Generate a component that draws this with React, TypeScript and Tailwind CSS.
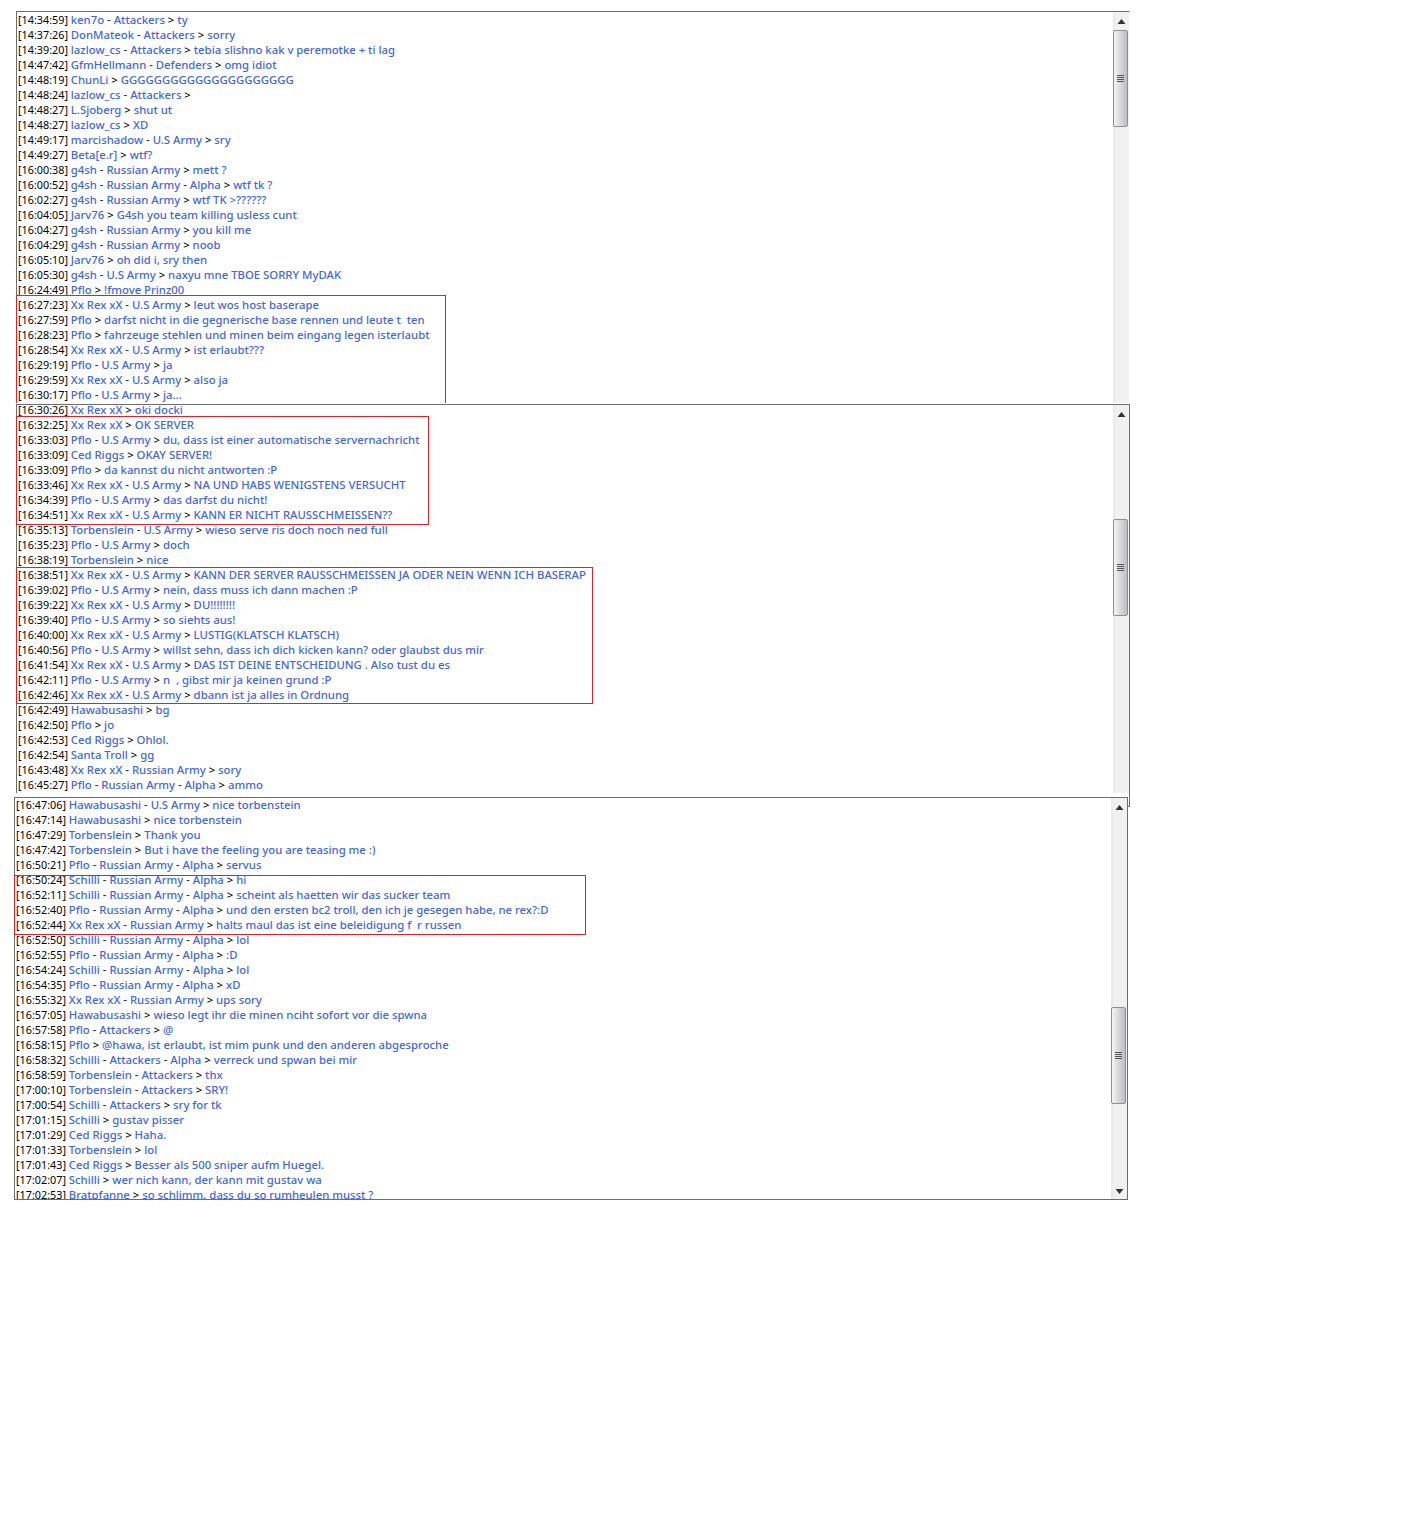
/**
 * Three stacked chat log screenshots with red highlight boxes.
 */

import React from 'react';

const panelOneRows = [
  '[14:34:59]|ken7o - Attackers > ty',
  '[14:37:26]|DonMateok - Attackers > sorry',
  '[14:39:20]|lazlow_cs - Attackers > tebia slishno kak v peremotke + ti lag',
  '[14:47:42]|GfmHellmann - Defenders > omg idiot',
  '[14:48:19]|ChunLi > GGGGGGGGGGGGGGGGGGGGG',
  '[14:48:24]|lazlow_cs - Attackers >',
  '[14:48:27]|L.Sjoberg > shut ut',
  '[14:48:27]|lazlow_cs > XD',
  '[14:49:17]|marcishadow - U.S Army > sry',
  '[14:49:27]|Beta[e.r] > wtf?',
  '[16:00:38]|g4sh - Russian Army > mett ?',
  '[16:00:52]|g4sh - Russian Army - Alpha > wtf tk ?',
  '[16:02:27]|g4sh - Russian Army > wtf TK >??????',
  '[16:04:05]|Jarv76 > G4sh you team killing usless cunt',
  '[16:04:27]|g4sh - Russian Army > you kill me',
  '[16:04:29]|g4sh - Russian Army > noob',
  '[16:05:10]|Jarv76 > oh did i, sry then',
  '[16:05:30]|g4sh - U.S Army > naxyu mne TBOE SORRY MyDAK',
  '[16:24:49]|Pflo > !fmove Prinz00',
  '[16:27:23]|Xx Rex xX - U.S Army > leut wos host baserape',
  '[16:27:59]|Pflo > darfst nicht in die gegnerische base rennen und leute t  ten',
  '[16:28:23]|Pflo > fahrzeuge stehlen und minen beim eingang legen isterlaubt',
  '[16:28:54]|Xx Rex xX - U.S Army > ist erlaubt???',
  '[16:29:19]|Pflo - U.S Army > ja',
  '[16:29:59]|Xx Rex xX - U.S Army > also ja',
  '[16:30:17]|Pflo - U.S Army > ja...',
];

const panelTwoRows = [
  '[16:30:26]|Xx Rex xX > oki docki',
  '[16:32:25]|Xx Rex xX > OK SERVER',
  '[16:33:03]|Pflo - U.S Army > du, dass ist einer automatische servernachricht',
  '[16:33:09]|Ced Riggs > OKAY SERVER!',
  '[16:33:09]|Pflo > da kannst du nicht antworten :P',
  '[16:33:46]|Xx Rex xX - U.S Army > NA UND HABS WENIGSTENS VERSUCHT',
  '[16:34:39]|Pflo - U.S Army > das darfst du nicht!',
  '[16:34:51]|Xx Rex xX - U.S Army > KANN ER NICHT RAUSSCHMEISSEN??',
  '[16:35:13]|Torbenslein - U.S Army > wieso serve ris doch noch ned full',
  '[16:35:23]|Pflo - U.S Army > doch',
  '[16:38:19]|Torbenslein > nice',
  '[16:38:51]|Xx Rex xX - U.S Army > KANN DER SERVER RAUSSCHMEISSEN JA ODER NEIN WENN ICH BASERAP',
  '[16:39:02]|Pflo - U.S Army > nein, dass muss ich dann machen :P',
  '[16:39:22]|Xx Rex xX - U.S Army > DU!!!!!!!!',
  '[16:39:40]|Pflo - U.S Army > so siehts aus!',
  '[16:40:00]|Xx Rex xX - U.S Army > LUSTIG(KLATSCH KLATSCH)',
  '[16:40:56]|Pflo - U.S Army > willst sehn, dass ich dich kicken kann? oder glaubst dus mir',
  '[16:41:54]|Xx Rex xX - U.S Army > DAS IST DEINE ENTSCHEIDUNG . Also tust du es',
  '[16:42:11]|Pflo - U.S Army > n  , gibst mir ja keinen grund :P',
  '[16:42:46]|Xx Rex xX - U.S Army > dbann ist ja alles in Ordnung',
  '[16:42:49]|Hawabusashi > bg',
  '[16:42:50]|Pflo > jo',
  '[16:42:53]|Ced Riggs > Ohlol.',
  '[16:42:54]|Santa Troll > gg',
  '[16:43:48]|Xx Rex xX - Russian Army > sory',
  '[16:45:27]|Pflo - Russian Army - Alpha > ammo',
];

const panelThreeRows = [
  '[16:47:06]|Hawabusashi - U.S Army > nice torbenstein',
  '[16:47:14]|Hawabusashi > nice torbenstein',
  '[16:47:29]|Torbenslein > Thank you',
  '[16:47:42]|Torbenslein > But i have the feeling you are teasing me :)',
  '[16:50:21]|Pflo - Russian Army - Alpha > servus',
  '[16:50:24]|Schilli - Russian Army - Alpha > hi',
  '[16:52:11]|Schilli - Russian Army - Alpha > scheint als haetten wir das sucker team',
  '[16:52:40]|Pflo - Russian Army - Alpha > und den ersten bc2 troll, den ich je gesegen habe, ne rex?:D',
  '[16:52:44]|Xx Rex xX - Russian Army > halts maul das ist eine beleidigung f  r russen',
  '[16:52:50]|Schilli - Russian Army - Alpha > lol',
  '[16:52:55]|Pflo - Russian Army - Alpha > :D',
  '[16:54:24]|Schilli - Russian Army - Alpha > lol',
  '[16:54:35]|Pflo - Russian Army - Alpha > xD',
  '[16:55:32]|Xx Rex xX - Russian Army > ups sory',
  '[16:57:05]|Hawabusashi > wieso legt ihr die minen nciht sofort vor die spwna',
  '[16:57:58]|Pflo - Attackers > @',
  '[16:58:15]|Pflo > @hawa, ist erlaubt, ist mim punk und den anderen abgesproche',
  '[16:58:32]|Schilli - Attackers - Alpha > verreck und spwan bei mir',
  '[16:58:59]|Torbenslein - Attackers > thx',
  '[17:00:10]|Torbenslein - Attackers > SRY!',
  '[17:00:54]|Schilli - Attackers > sry for tk',
  '[17:01:15]|Schilli > gustav pisser',
  '[17:01:29]|Ced Riggs > Haha.',
  '[17:01:33]|Torbenslein > lol',
  '[17:01:43]|Ced Riggs > Besser als 500 sniper aufm Huegel.',
  '[17:02:07]|Schilli > wer nich kann, der kann mit gustav wa',
  '[17:02:53]|Bratpfanne > so schlimm, dass du so rumheulen musst ?',
];

const LogRow: React.FC<{ row: string }> = ({ row }) => {
  const [time, rest] = row.split('|');
  const arrow = rest.indexOf(' >');
  const names = rest.slice(0, arrow).split(' - ');
  const message = rest.slice(arrow + 2).trimStart();

  return (
    <div className="h-[15px] whitespace-pre text-[11.33px] leading-[15px] font-medium">
      <span className="text-[10.8px] font-normal text-black">{time} </span>
      {names.map((name, index) => (
        <React.Fragment key={index}>
          {index > 0 && <span className="text-[#333333]"> - </span>}
          <span className="text-[#3f66e6]">{name}</span>
        </React.Fragment>
      ))}
      <span className="text-black"> &gt; </span>
      <span className="text-[#3f66e6]">{message}</span>
    </div>
  );
};

const Arrow: React.FC<{ down?: boolean }> = ({ down }) => (
  <svg width="9" height="5" viewBox="0 0 9 5" className={down ? 'rotate-180' : ''}>
    <path d="M4.5 0 L8.5 5 H0.5 Z" fill="#333333" />
  </svg>
);

const Scrollbar: React.FC<{ thumbOffset: string; bottomArrow?: boolean }> = ({ thumbOffset, bottomArrow }) => (
  <div className="flex w-4 shrink-0 flex-col bg-gradient-to-r from-[#e8e8e8] to-[#f1f1f1] to-[20%]">
    <div className="flex h-[18px] shrink-0 items-center justify-center">
      <Arrow />
    </div>
    <div className={`flex h-[97px] w-[15px] shrink-0 flex-col items-center justify-center gap-px rounded-[2px] border border-[#8e8f8f] bg-gradient-to-r from-[#f3f3f3] via-[#d8d8da] to-[#bcbdc0] ${thumbOffset}`}>
      <div className="h-px w-[7px] bg-[#555555]" />
      <div className="h-px w-[7px] bg-[#555555]" />
      <div className="h-px w-[7px] bg-[#555555]" />
      <div className="h-px w-[7px] bg-[#555555]" />
    </div>
    {bottomArrow && (
      <div className="mt-auto mb-[5px] flex h-[5px] shrink-0 items-center justify-center">
        <Arrow down />
      </div>
    )}
  </div>
);

export default function App() {
  return (
    <div className="min-h-[1540px] bg-white pt-[11px] pl-[14px] font-['Noto_Sans','Open_Sans',sans-serif]">
      {/* First capture, bottom edge cut off */}
      <div className="relative ml-[2px] flex h-[392px] w-[1114px] border-t border-r border-l border-t-[#6d6d6d] border-r-transparent border-l-[#6d6d6d]">
        <div className="min-w-0 flex-1 overflow-hidden pl-px">
          {panelOneRows.map((row) => (
            <LogRow key={row} row={row} />
          ))}
        </div>
        <Scrollbar thumbOffset="mt-0" />
        <div className="absolute top-[283px] -left-px h-[108px] w-[430px] border border-b-0 border-[#ed1c24]" />
      </div>

      {/* Second capture, the third one overlaps its lower edge */}
      <div className="relative mt-px ml-[2px] h-[403px] w-[1114px] border-t border-r border-b border-[#6d6d6d]">
        <div className="flex h-[388px] border-l border-[#6d6d6d]">
          <div className="min-w-0 flex-1 overflow-hidden pl-px">
            <div className="-mt-[3px]">
              {panelTwoRows.map((row) => (
                <LogRow key={row} row={row} />
              ))}
            </div>
          </div>
          <Scrollbar thumbOffset="mt-[96px]" />
        </div>
        <div className="absolute top-[11px] left-0 h-[109px] w-[413px] border border-[#ed1c24]" />
        <div className="absolute top-[162px] left-0 h-[137px] w-[577px] border border-[#ed1c24]" />
      </div>

      {/* Third capture */}
      <div className="relative -mt-[10px] flex h-[403px] w-[1114px] border border-[#6d6d6d] bg-white">
        <div className="min-w-0 flex-1 overflow-hidden pl-px">
          <div className="-mt-px">
            {panelThreeRows.map((row) => (
              <LogRow key={row} row={row} />
            ))}
          </div>
        </div>
        <Scrollbar thumbOffset="mt-[191px]" bottomArrow />
        <div className="absolute top-[77px] -left-px h-[60px] w-[572px] border border-[#ed1c24]" />
      </div>
    </div>
  );
}
